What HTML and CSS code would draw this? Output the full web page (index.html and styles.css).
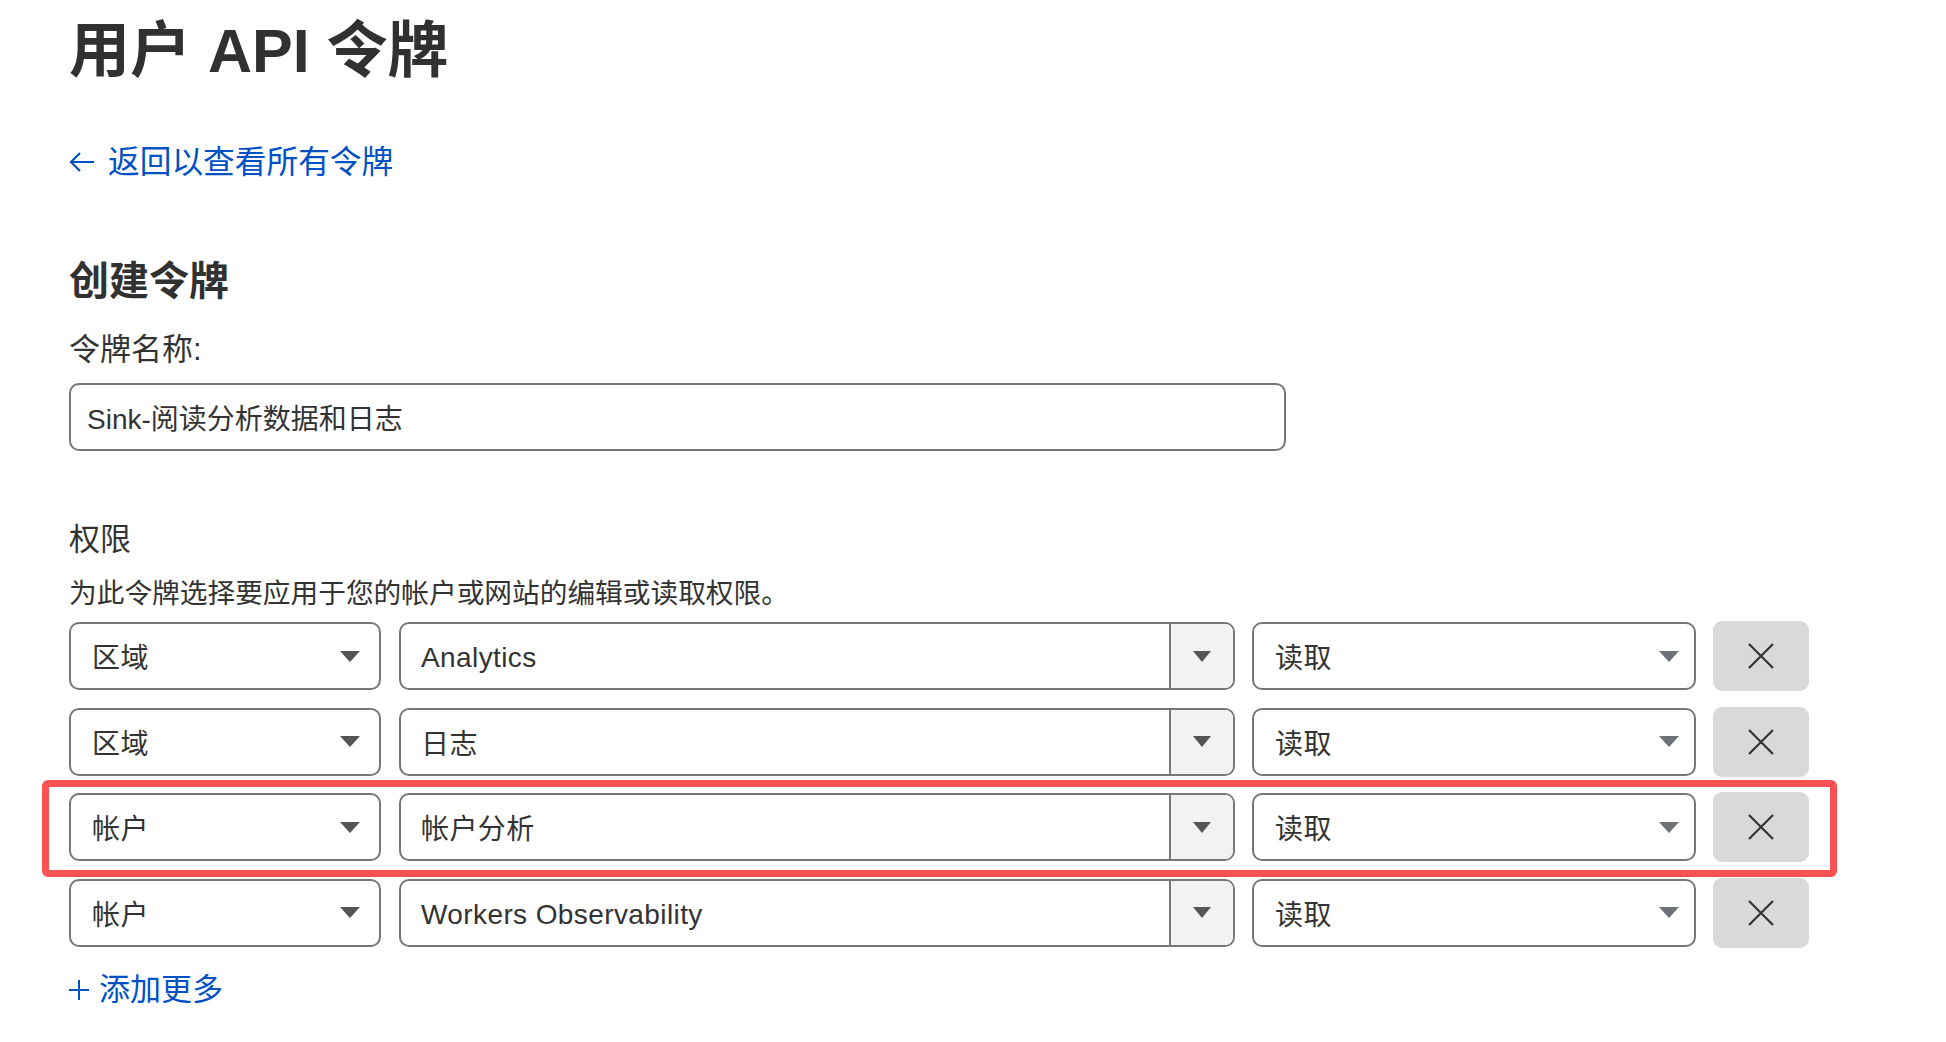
FILE: index.html
```html
<!DOCTYPE html>
<html lang="zh-CN">
<head>
<meta charset="utf-8">
<title>用户 API 令牌</title>
<link rel="stylesheet" href="styles.css">
</head>
<body>
<main class="page">
  <h1 class="title">用户 API 令牌</h1>
  <a class="back-link" href="#">
    <svg class="back-arrow" width="26" height="20" viewBox="0 0 26 20" aria-hidden="true"><path d="M25 10H2M11 1 2 10l9 9" fill="none" stroke="currentColor" stroke-width="2.2"/></svg>
    <span>返回以查看所有令牌</span>
  </a>

  <h2 class="section-title">创建令牌</h2>
  <label class="field-label" for="token-name">令牌名称:</label>
  <div class="text-input" id="token-name">Sink-阅读分析数据和日志</div>

  <h3 class="perm-title">权限</h3>
  <p class="perm-desc">为此令牌选择要应用于您的帐户或网站的编辑或读取权限。</p>

  <div class="perm-rows">
    <div class="perm-row">
      <div class="select scope"><span>区域</span><i class="caret"></i></div>
      <div class="combo"><span class="combo-text latin">Analytics</span><span class="combo-btn"><i class="caret"></i></span></div>
      <div class="select level"><span>读取</span><i class="caret caret-blue"></i></div>
      <button class="del-btn" type="button"><svg width="26" height="26" viewBox="0 0 26 26"><path d="M1 1l24 24M25 1 1 25" stroke="#333" stroke-width="2.2" fill="none"/></svg></button>
    </div>
    <div class="perm-row">
      <div class="select scope"><span>区域</span><i class="caret"></i></div>
      <div class="combo"><span class="combo-text">日志</span><span class="combo-btn"><i class="caret"></i></span></div>
      <div class="select level"><span>读取</span><i class="caret caret-blue"></i></div>
      <button class="del-btn" type="button"><svg width="26" height="26" viewBox="0 0 26 26"><path d="M1 1l24 24M25 1 1 25" stroke="#333" stroke-width="2.2" fill="none"/></svg></button>
    </div>
    <div class="perm-row highlighted">
      <div class="select scope"><span>帐户</span><i class="caret"></i></div>
      <div class="combo"><span class="combo-text">帐户分析</span><span class="combo-btn"><i class="caret"></i></span></div>
      <div class="select level"><span>读取</span><i class="caret caret-blue"></i></div>
      <button class="del-btn" type="button"><svg width="26" height="26" viewBox="0 0 26 26"><path d="M1 1l24 24M25 1 1 25" stroke="#333" stroke-width="2.2" fill="none"/></svg></button>
      <div class="highlight-box"></div>
    </div>
    <div class="perm-row">
      <div class="select scope"><span>帐户</span><i class="caret"></i></div>
      <div class="combo"><span class="combo-text latin">Workers Observability</span><span class="combo-btn"><i class="caret"></i></span></div>
      <div class="select level"><span>读取</span><i class="caret caret-blue"></i></div>
      <button class="del-btn" type="button"><svg width="26" height="26" viewBox="0 0 26 26"><path d="M1 1l24 24M25 1 1 25" stroke="#333" stroke-width="2.2" fill="none"/></svg></button>
    </div>
  </div>

  <a class="add-link" href="#">
    <svg class="plus" width="20" height="20" viewBox="0 0 20 20" aria-hidden="true"><path d="M10 0v20M0 10h20" stroke="currentColor" stroke-width="2" fill="none"/></svg>
    <span>添加更多</span>
  </a>
</main>
</body>
</html>
```

FILE: styles.css
```css
html, body {
  margin: 0;
  padding: 0;
  background: #ffffff;
}

body {
  font-family: "Liberation Sans", "Noto Sans CJK SC", sans-serif;
  color: #333333;
}

.page {
  padding: 13px 0 0 69px;
  display: flex;
  flex-direction: column;
  align-items: flex-start;
}

.title {
  margin: 0;
  font-size: 61px;
  line-height: 76px;
  font-weight: 700;
  color: #313131;
}

.back-link {
  margin-top: 53px;
  display: flex;
  align-items: center;
  gap: 13px;
  font-size: 31.7px;
  line-height: 40px;
  color: #0051c3;
  text-decoration: none;
}

.back-arrow {
  display: block;
}

.section-title {
  margin: 75px 0 0;
  font-size: 40px;
  line-height: 48px;
  font-weight: 700;
  color: #313131;
}

.field-label {
  margin-top: 25px;
  font-size: 31px;
  line-height: 40px;
}

.text-input {
  margin-top: 13px;
  box-sizing: border-box;
  width: 1217px;
  height: 68px;
  border: 2px solid #777777;
  border-radius: 10px;
  padding-left: 16px;
  display: flex;
  align-items: center;
  font-size: 28px;
}

.perm-title {
  margin: 69px 0 0;
  font-size: 31px;
  line-height: 40px;
  font-weight: 400;
}

.perm-desc {
  margin: 16px 0 0;
  font-size: 27.7px;
  line-height: 36px;
}

.perm-rows {
  margin-top: 10px;
  display: flex;
  flex-direction: column;
  gap: 17.5px;
}

.perm-row {
  position: relative;
  display: flex;
  align-items: center;
  height: 68px;
  font-size: 28px;
  letter-spacing: 0.4px;
}

.select {
  box-sizing: border-box;
  height: 68px;
  border: 2px solid #777777;
  border-radius: 10px;
  display: flex;
  align-items: center;
  justify-content: space-between;
  padding-left: 21px;
}

.scope {
  width: 312px;
  padding-right: 19px;
}

.level {
  width: 444px;
  margin-left: 17px;
  padding-right: 15px;
}

.caret {
  display: block;
  width: 0;
  height: 0;
  border-left: 10px solid transparent;
  border-right: 10px solid transparent;
  border-top: 11px solid #555555;
}

.caret-blue {
  border-top-color: #6c7277;
}

.combo {
  box-sizing: border-box;
  width: 836px;
  height: 68px;
  margin-left: 18px;
  border: 2px solid #777777;
  border-radius: 10px;
  display: flex;
  overflow: hidden;
}

.combo-text {
  flex: 1;
  display: flex;
  align-items: center;
  padding-left: 20px;
}

.combo-text.latin {
  padding-top: 4px;
}

.combo-btn {
  width: 62px;
  border-left: 2px solid #777777;
  background: #f2f2f2;
  display: flex;
  align-items: center;
  justify-content: center;
}

.combo-btn .caret {
  border-left-width: 9px;
  border-right-width: 9px;
  border-top-width: 11px;
}

.del-btn {
  margin-left: 17px;
  width: 96px;
  height: 70px;
  border: none;
  border-radius: 9px;
  background: #d9d9d9;
  display: flex;
  align-items: center;
  justify-content: center;
  padding: 0;
}

.del-btn svg {
  display: block;
}

.highlight-box {
  position: absolute;
  left: -27px;
  top: -13px;
  width: 1795px;
  height: 97px;
  box-sizing: border-box;
  border: 7px solid #f95252;
  border-radius: 6px;
  pointer-events: none;
}

.add-link {
  margin-top: 23px;
  display: flex;
  align-items: center;
  gap: 10px;
  font-size: 31px;
  line-height: 40px;
  color: #0051c3;
  text-decoration: none;
}

.plus {
  display: block;
}
```
